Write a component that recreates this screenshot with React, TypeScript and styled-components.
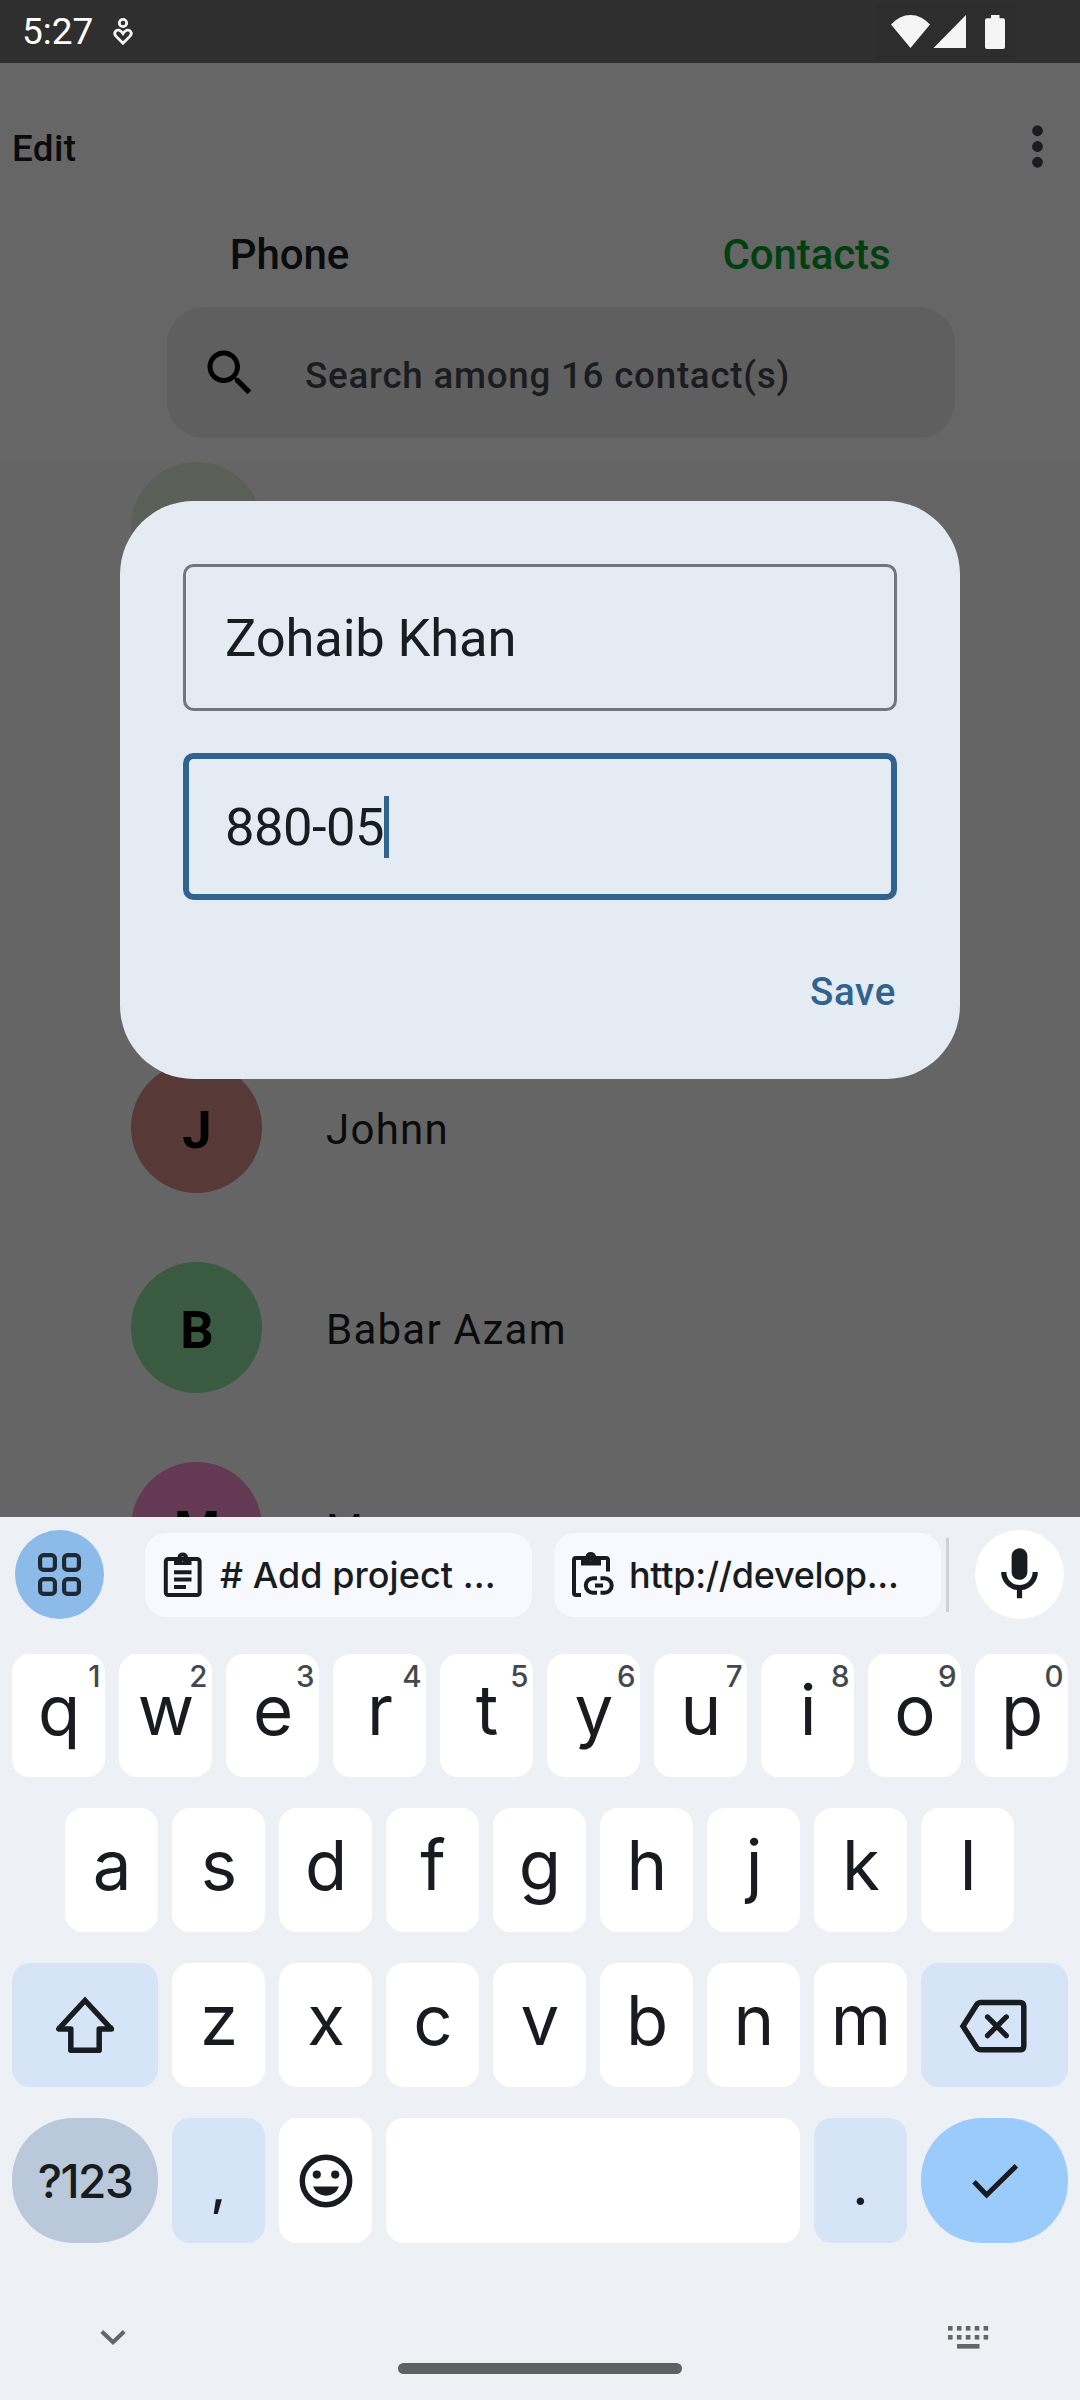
import React from "react";
import styled, { createGlobalStyle } from "styled-components";

const ink = "#181c20";

const GlobalStyle = createGlobalStyle`
  * { box-sizing: border-box; }
  body { margin: 0; background: #666666; }
`;

const Screen = styled.div`
  position: relative;
  display: flex;
  flex-direction: column;
  width: 1080px;
  height: 2400px;
  overflow: hidden;
  background: #666666;
  font-family: Roboto, "Liberation Sans", sans-serif;
  color: #0a0b0c;
  white-space: nowrap;
`;

const StatusBar = styled.header`
  display: flex;
  align-items: center;
  height: 63px;
  padding: 0 64px 0 22px;
  background: #2f2f2f;
`;

const Clock = styled.span`
  width: 91px;
  font-size: 37px;
  line-height: 44px;
  color: #ffffff;
`;

const StatusIcons = styled.div`
  display: flex;
  align-items: center;
  height: 58px;
  margin-left: auto;
  background: #2d2d2d;
`;

const Icon = styled.svg`
  display: block;
  flex: none;
  overflow: visible;
`;

const TopBar = styled.div`
  display: flex;
  align-items: center;
  justify-content: space-between;
  height: 167px;
  padding: 0 11px 0 12px;
`;

const EditAction = styled.span`
  padding-top: 4px;
  font-size: 36.75px;
  font-weight: 500;
  letter-spacing: 0.4px;
`;

const Tabs = styled.nav`
  display: flex;
  padding: 0 15px 0 31px;
  height: 49px;
`;

const Tab = styled.span<{ $active?: boolean }>`
  width: 517px;
  font-size: 42px;
  font-weight: 500;
  line-height: 49px;
  text-align: center;
  letter-spacing: -0.1px;
  color: ${(p) => (p.$active ? "#00400e" : "#0a0b0c")};
`;

const SearchBox = styled.div`
  display: flex;
  align-items: center;
  gap: 45px;
  width: 788px;
  height: 131px;
  margin: 28px 0 24px 167px;
  padding-left: 33px;
  border-radius: 37px;
  background: #5f5f5f;
`;

const SearchText = styled.span`
  padding-top: 6px;
  font-size: 36.75px;
  font-weight: 500;
  letter-spacing: 0.75px;
  color: #1b1c20;
`;

const ContactList = styled.main`
  display: flex;
  flex-direction: column;
  gap: 69px;
  height: 1055px;
  padding-left: 131px;
  overflow: hidden;
  background: #656565;
`;

const ContactRow = styled.div`
  display: flex;
  flex: none;
  align-items: center;
  gap: 64px;
  height: 131px;
`;

const Avatar = styled.div<{ $tint: string }>`
  display: flex;
  align-items: center;
  justify-content: center;
  width: 131px;
  height: 131px;
  padding: 4px 0 0 1px;
  border-radius: 50%;
  background: ${(p) => p.$tint};
  font-size: 52.5px;
  font-weight: 700;
  color: #000000;
`;

const ContactName = styled.span`
  padding-top: 4px;
  font-size: 42px;
  letter-spacing: 1.25px;
`;

const Dialog = styled.section`
  position: absolute;
  left: 120px;
  top: 501px;
  display: flex;
  flex-direction: column;
  gap: 42px;
  width: 840px;
  height: 578px;
  padding: 63px;
  border-radius: 73.5px;
  background: #e4ebf3;
`;

const Field = styled.div<{ $focused?: boolean }>`
  display: flex;
  align-items: center;
  height: 147px;
  padding-left: ${(p) => (p.$focused ? 36 : 39)}px;
  border: ${(p) => (p.$focused ? "6px solid #30638f" : "3px solid #72767e")};
  border-radius: 10.5px;
  font-size: 52.5px;
  letter-spacing: ${(p) => (p.$focused ? -0.5 : -0.15)}px;
  color: #191c20;
`;

const Caret = styled.i`
  width: 5px;
  height: 62px;
  background: #30638f;
`;

const SaveAction = styled.span`
  align-self: flex-end;
  margin: 28px 1px 0 0;
  font-size: 38.5px;
  font-weight: 500;
  line-height: 44px;
  letter-spacing: 0.7px;
  color: #30638f;
`;

const Keyboard = styled.section`
  display: flex;
  flex-direction: column;
  height: 883px;
  background: #edf0f5;
  font-family: Inter, Roboto, sans-serif;
  color: ${ink};
`;

const Toolbar = styled.div`
  display: flex;
  align-items: center;
  height: 115px;
  margin-bottom: 22px;
  padding: 0 16px 0 15px;
`;

const RoundButton = styled.div<{ $fill: string }>`
  display: flex;
  align-items: center;
  justify-content: center;
  width: 89px;
  height: 89px;
  border-radius: 50%;
  background: ${(p) => p.$fill};
`;

const Chips = styled.div`
  display: flex;
  gap: 22px;
  margin-left: 41px;
`;

const Chip = styled.div`
  display: flex;
  align-items: center;
  gap: 15px;
  width: 387px;
  height: 84px;
  padding-left: 15px;
  border-radius: 21px;
  background: #f8f9fe;
`;

const ChipText = styled.span<{ $tracking: number }>`
  font-size: 36px;
  font-weight: 500;
  letter-spacing: ${(p) => p.$tracking}px;
`;

const Divider = styled.i`
  width: 3px;
  height: 74px;
  margin: 0 26px 0 5px;
  background: #cdd1d6;
`;

const KeyRow = styled.div<{ $height: number; $inset?: number }>`
  display: flex;
  gap: 14px;
  height: ${(p) => p.$height}px;
  margin-bottom: 31px;
  padding: 0 ${(p) => p.$inset ?? 12}px;
`;

const Key = styled.div<{ $tone?: string; $width?: number; $pill?: boolean }>`
  position: relative;
  display: flex;
  align-items: center;
  justify-content: center;
  flex: 0 0 ${(p) => p.$width ?? 93}px;
  border-radius: ${(p) => (p.$pill ? 61 : 18)}px;
  background: ${(p) => p.$tone ?? "#ffffff"};
`;

const Letter = styled.span`
  padding: 0 0 11px 1px;
  font-size: 69px;
  line-height: 84px;
`;

const Hint = styled.span`
  position: absolute;
  top: 4px;
  right: 5px;
  font-size: 29.5px;
  font-weight: 500;
  line-height: 36px;
  letter-spacing: -0.5px;
  color: #43474e;
`;

const SymbolLabel = styled.span`
  font-size: 46px;
  font-weight: 500;
  letter-spacing: -1.5px;
`;

const Punctuation = styled.span`
  padding-top: 12px;
  font-size: 52px;
  font-weight: 500;
  line-height: 68px;
`;

const NavBar = styled.footer`
  display: flex;
  justify-content: space-between;
  padding: 52px 91px 0 100px;
`;

const HomePill = styled.i`
  width: 284px;
  height: 11px;
  margin: 37px 0 0 6px;
  border-radius: 5.5px;
  background: #5f6062;
`;

const contacts = [
  { initial: "", name: "", tint: "#5a6057" },
  { initial: "", name: "", tint: "#656565" },
  { initial: "", name: "", tint: "#656565" },
  { initial: "J", name: "Johnn", tint: "#573937" },
  { initial: "B", name: "Babar Azam", tint: "#3a5a42" },
  { initial: "M", name: "M", tint: "#643953" },
];

const soft = "#d5e4f7";

export default function App() {
  return (
    <Screen>
      <GlobalStyle />
      <StatusBar>
        <Clock>5:27</Clock>
        <Icon width="20" height="28" viewBox="0 0 20 28" fill="none" stroke="#f5f5f5" strokeWidth="2.8">
          <circle cx="10" cy="5" r="3.7" />
          <path d="M10 25.200 3.200 18.400C-.2 14.600 3 11.600 6 12.200c2 .4 3 2 4 3.400 1-1.400 2-3 4-3.400 3-.6 6.200 2.400 2.800 6.200Z" />
        </Icon>
        <StatusIcons>
          <Icon width="140" height="58" viewBox="876 2 140 58" fill="#f5f5f5">
            <path d="M910.500 47 891 23.500Q899.500 14 910.500 14T930 23.500Z" />
            <path d="M933.500 47H966V14Z" />
            <path d="M991 14h8.500v3.300h3.500q2 0 2 2V46q0 2-2 2h-16q-2 0-2-2V19.300q0-2 2-2h4Z" />
          </Icon>
        </StatusIcons>
      </StatusBar>

      <TopBar>
        <EditAction>Edit</EditAction>
        <Icon width="63" height="63" viewBox="0 0 24 24" fill="#1b1c20">
          <circle cx="12" cy="6" r="2.050" />
          <circle cx="12" cy="12" r="2.050" />
          <circle cx="12" cy="18" r="2.050" />
        </Icon>
      </TopBar>

      <Tabs>
        <Tab>Phone</Tab>
        <Tab $active>Contacts</Tab>
      </Tabs>

      <SearchBox>
        <Icon width="60" height="60" viewBox="0 0 24 24" fill="#000000">
          <path d="M15.500 14h-.79l-.28-.27C15.410 12.590 16 11.110 16 9.500 16 5.910 13.090 3 9.500 3S3 5.910 3 9.500 5.910 16 9.500 16c1.610 0 3.090-.59 4.230-1.570l.27.28v.79l5 4.990L20.490 19l-4.990-5zm-6 0C7.010 14 5 11.990 5 9.500S7.010 5 9.500 5 14 7.010 14 9.500 11.990 14 9.500 14z" />
        </Icon>
        <SearchText>Search among 16 contact(s)</SearchText>
      </SearchBox>

      <ContactList>
        {contacts.map((c, i) => (
          <ContactRow key={i}>
            <Avatar $tint={c.tint}>{c.initial}</Avatar>
            <ContactName>{c.name}</ContactName>
          </ContactRow>
        ))}
      </ContactList>

      <Dialog>
        <Field>Zohaib Khan</Field>
        <Field $focused>
          880-05
          <Caret />
        </Field>
        <SaveAction>Save</SaveAction>
      </Dialog>

      <Keyboard>
        <Toolbar>
          <RoundButton $fill="#8cbbea">
            <Icon width="43" height="43" viewBox="0 0 43 43" fill="none" stroke="#1d2a33" strokeWidth="4.200">
              <rect x="2.100" y="2.100" width="14.800" height="14.800" rx="3.500" />
              <rect x="26.100" y="2.100" width="14.800" height="14.800" rx="3.500" />
              <rect x="2.100" y="26.100" width="14.800" height="14.800" rx="3.500" />
              <rect x="26.100" y="26.100" width="14.800" height="14.800" rx="3.500" />
            </Icon>
          </RoundButton>
          <Chips>
            <Chip>
              <Icon width="45" height="45" viewBox="160 1553 45 45" fill="none" stroke={ink} strokeWidth="4">
                <rect x="165.800" y="1560" width="33.800" height="36" rx="2.500" />
                <path fill={ink} stroke="none" fillRule="evenodd" d="M174 1566v-8h3.500a5.300 5.300 0 0 1 10.500 0h3.500v8Zm6.500-6a2.200 2.400 0 1 0 4.400 0a2.200 2.400 0 1 0-4.400 0" />
                <path d="M174 1573.300h17.500M174 1580.500h17.500M174 1588h12" />
              </Icon>
              <ChipText $tracking={0.05}># Add project ...</ChipText>
            </Chip>
            <Chip>
              <Icon width="45" height="45" viewBox="569 1552 45 45" fill="none" stroke={ink} strokeWidth="4">
                <path d="M581 1595h-5q-2 0-2-2v-33q0-2 2-2h30q2 0 2 2v11.500" />
                <path fill={ink} stroke="none" fillRule="evenodd" d="M581 1565.500v-9h4.500a5.300 5.300 0 0 1 10.500 0h5v9Zm7.500-7.500a2.200 2.200 0 1 0 4.400 0a2.200 2.200 0 1 0-4.400 0" />
                <path d="M597 1578.300h-4a7.200 7.200 0 0 0 0 14.400h4M600.500 1578.300h4a7.200 7.200 0 0 1 0 14.400h-4M595 1585.500h8" />
              </Icon>
              <ChipText $tracking={-0.3}>http://develop...</ChipText>
            </Chip>
          </Chips>
          <Divider />
          <RoundButton $fill="#ffffff">
            <Icon width="63" height="63" viewBox="0 0 24 24" fill={ink}>
              <path d="M12 14c1.660 0 3-1.340 3-3V5c0-1.660-1.340-3-3-3S9 3.340 9 5v6c0 1.660 1.340 3 3 3z" />
              <path d="M17 11c0 2.760-2.240 5-5 5s-5-2.240-5-5H5c0 3.530 2.610 6.430 6 6.920V21h2v-3.080c3.390-.49 6-3.390 6-6.920h-2z" />
            </Icon>
          </RoundButton>
        </Toolbar>

        <KeyRow $height={123}>
          {"qwertyuiop".split("").map((ch, i) => (
            <Key key={ch}>
              <Letter>{ch}</Letter>
              <Hint>{(i + 1) % 10}</Hint>
            </Key>
          ))}
        </KeyRow>
        <KeyRow $height={124} $inset={65}>
          {"asdfghjkl".split("").map((ch) => (
            <Key key={ch}>
              <Letter>{ch}</Letter>
            </Key>
          ))}
        </KeyRow>
        <KeyRow $height={124}>
          <Key $tone={soft} $width={146}>
            <Icon width="60" height="58" viewBox="55 1996 60 58" fill="none" stroke={ink} strokeWidth="5.500" strokeLinejoin="round">
              <path strokeLinejoin="miter" d="M60 2027.500 85 2000.500 110 2027.500" />
              <path d="M60 2027 58.800 2028.900H70.800V2050.300H99.200V2028.900H111.400L110 2027" />
            </Icon>
          </Key>
          {"zxcvbnm".split("").map((ch) => (
            <Key key={ch}>
              <Letter>{ch}</Letter>
            </Key>
          ))}
          <Key $tone={soft} $width={147}>
            <Icon width="67" height="54" viewBox="961.500 1999.500 67 54" fill="none" stroke={ink} strokeWidth="5.500">
              <path d="M963.500 2027.700 977 2006.500Q978.600 2004 981.500 2004H1020.500Q1024.300 2004 1024.300 2007.800V2047.500Q1024.300 2051.300 1020.500 2051.300H981.500Q978.600 2051.300 977 2048.800Z" />
              <path strokeLinecap="round" strokeWidth="5.200" d="m988 2018.400 18.800 18.800m0-18.800L988 2037.200" />
            </Icon>
          </Key>
        </KeyRow>
        <KeyRow $height={125}>
          <Key $tone="#b9c8db" $width={146} $pill>
            <SymbolLabel>?123</SymbolLabel>
          </Key>
          <Key $tone={soft}>
            <Punctuation>,</Punctuation>
          </Key>
          <Key>
            <Icon width="54" height="54" viewBox="-27 -27 54 54" fill={ink}>
              <circle r="23.700" fill="none" stroke={ink} strokeWidth="5.400" />
              <circle cx="-9.200" cy="-6.400" r="4.100" />
              <circle cx="9.200" cy="-6.400" r="4.100" />
              <path d="M-13 5.500H13Q9.500 14.700 0 14.700T-13 5.500Z" />
            </Icon>
          </Key>
          <Key $width={414} />
          <Key $tone={soft}>
            <Punctuation>.</Punctuation>
          </Key>
          <Key $tone="#9bcbfb" $width={147} $pill>
            <Icon width="46" height="34" viewBox="972 2164 46 34" fill="none" stroke={ink} strokeWidth="5">
              <path d="M974 2181.700 986.600 2195 1016.300 2165.800" />
            </Icon>
          </Key>
        </KeyRow>
        <NavBar>
          <Icon width="26" height="22" viewBox="0 0 26 22" fill="none" stroke="#646566" strokeWidth="4">
            <path d="M1.800 5.500 13 16.300 24.200 5.500" />
          </Icon>
          <HomePill />
          <Icon width="41" height="23" viewBox="0 0 41 23" fill="#666666">
            {[0, 1, 2, 3, 4].map((i) => (
              <React.Fragment key={i}>
                <rect x={i * 8.9} y="0" width="4.600" height="4.600" />
                <rect x={i * 8.9} y="9" width="4.600" height="4.600" />
              </React.Fragment>
            ))}
            <rect x="9" y="18" width="22.500" height="4.600" />
          </Icon>
        </NavBar>
      </Keyboard>
    </Screen>
  );
}
